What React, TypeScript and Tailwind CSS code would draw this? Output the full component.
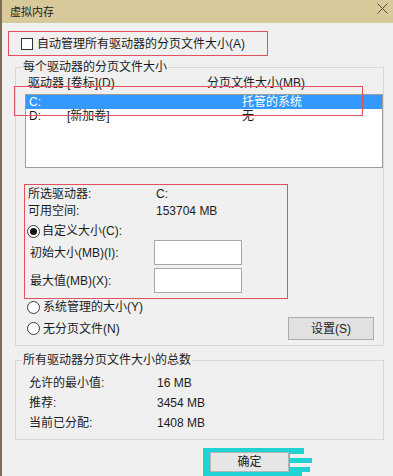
import React from "react";

function Radio({ checked }: { checked?: boolean }) {
  return (
    <span className="flex h-[13px] w-[13px] shrink-0 items-center justify-center rounded-full border border-[#3a3a3a] bg-white">
      {checked && <span className="h-[7px] w-[7px] rounded-full bg-[#111]" />}
    </span>
  );
}

function InfoRow({ label, value, h }: { label: string; value: string; h: string }) {
  return (
    <div className={`flex items-center pl-[3px] ${h}`}>
      <span className="w-[128px]">{label}</span>
      <span>{value}</span>
    </div>
  );
}

export default function App() {
  return (
    <div className="relative h-[476px] w-[393px] overflow-hidden border-l-2 border-[#7a6d52] bg-[#f0f0f0] font-['Liberation_Sans','Noto_Sans_CJK_SC',sans-serif] text-[12px] leading-[16px] text-[#1c1c1c]">
      {/* title bar */}
      <div className="flex h-[23px] items-center justify-between bg-[#d8c99b] pl-[8px] pr-[5px]">
        <span className="text-[11px] text-[#222]">虚拟内存</span>
        <svg width="11" height="11" viewBox="0 0 11 11" className="mb-[6px]">
          <path d="M0.5 0.5 L10.5 10.5 M10.5 0.5 L0.5 10.5" stroke="#4a4a4a" strokeWidth="1" />
        </svg>
      </div>

      {/* auto manage */}
      <div className="ml-[6px] mt-[8px] flex h-[25px] w-[260px] items-center gap-[4px] border border-[#e2505d] pl-[12px]">
        <span className="h-[12px] w-[12px] border border-[#333] bg-white" />
        <span>自动管理所有驱动器的分页文件大小(A)</span>
      </div>

      {/* per drive */}
      <fieldset className="ml-[13px] mt-[3px] w-[369px] border border-[#d8d8d8] pb-[5px]">
        <legend className="ml-[6px] px-[1px] leading-[16px]">每个驱动器的分页文件大小</legend>
        <div className="flex h-[16px] items-center pl-[12px]">
          <span className="w-[179px]">驱动器 [卷标](D)</span>
          <span>分页文件大小(MB)</span>
        </div>
        <div className="ml-[9px] mt-[3px] h-[74px] w-[358px] border border-[#9c9c9c] bg-white">
          <div className="flex h-[14px] items-center bg-[#3399ff] pl-[3px] text-white">
            <span className="w-[38px]">C:</span>
            <span className="w-[175px]"></span>
            <span>托管的系统</span>
          </div>
          <div className="flex h-[14px] items-center pl-[3px]">
            <span className="w-[38px]">D:</span>
            <span className="w-[175px]">[新加卷]</span>
            <span>无</span>
          </div>
        </div>

        <div className="ml-[8px] mt-[16px] h-[115px] w-[264px] border border-[#e2505d]">
          <InfoRow label="所选驱动器:" value="C:" h="h-[17px]" />
          <InfoRow label="可用空间:" value="153704 MB" h="h-[17px]" />
          <div className="mt-[4px] flex h-[16px] items-center gap-[2px] pl-[2px]">
            <Radio checked />
            <span>自定义大小(C):</span>
          </div>
          <div className="mt-[1px] flex h-[25px] items-center pl-[5px]">
            <span className="w-[124px]">初始大小(MB)(I):</span>
            <span className="h-[25px] w-[88px] border border-[#a8a8a8] bg-white" />
          </div>
          <div className="mt-[3px] flex h-[25px] items-center pl-[5px]">
            <span className="w-[124px]">最大值(MB)(X):</span>
            <span className="h-[25px] w-[88px] border border-[#a8a8a8] bg-white" />
          </div>
        </div>

        <div className="ml-[11px] flex h-[16px] items-center gap-[3px]">
          <Radio />
          <span>系统管理的大小(Y)</span>
        </div>
        <div className="mt-[2px] flex h-[23px] items-center justify-between pl-[11px] pr-[9px]">
          <div className="flex items-center gap-[3px]">
            <Radio />
            <span>无分页文件(N)</span>
          </div>
          <button className="flex h-[23px] w-[86px] items-center justify-center border border-[#adadad] bg-[#e1e1e1]">
            设置(S)
          </button>
        </div>
      </fieldset>

      {/* totals */}
      <fieldset className="ml-[13px] mt-[6px] w-[369px] border border-[#d8d8d8] pb-[6px] pt-[5px]">
        <legend className="ml-[6px] px-[1px] leading-[16px]">所有驱动器分页文件大小的总数</legend>
        <div className="pl-[10px]">
          <InfoRow label="允许的最小值:" value="16 MB" h="h-[20px]" />
          <InfoRow label="推荐:" value="3454 MB" h="h-[20px]" />
          <InfoRow label="当前已分配:" value="1408 MB" h="h-[20px]" />
        </div>
      </fieldset>

      {/* ok */}
      <div className="ml-[201px] mt-[8px] flex">
        <div className="h-[28px] w-[87px] bg-[#1fd2d4] pl-[7px] pt-[4px]">
          <button className="flex h-[20px] w-[79px] items-center justify-center border border-[#b5b5b5] bg-[#e6e6e6]">
            确定
          </button>
        </div>
        <svg width="26" height="28" viewBox="0 0 26 28">
          <rect x="0" y="0" width="14" height="6" fill="#1fd2d4" />
          <rect x="0" y="10" width="22" height="5" fill="#1fd2d4" />
          <rect x="0" y="19" width="20" height="5" fill="#1fd2d4" />
          <rect x="0" y="24" width="12" height="4" fill="#1fd2d4" />
        </svg>
      </div>

      {/* annotation on list header / selected row */}
      <div className="absolute left-[12px] top-[86px] h-[30px] w-[349px] border border-[#e2505d]" />
    </div>
  );
}
